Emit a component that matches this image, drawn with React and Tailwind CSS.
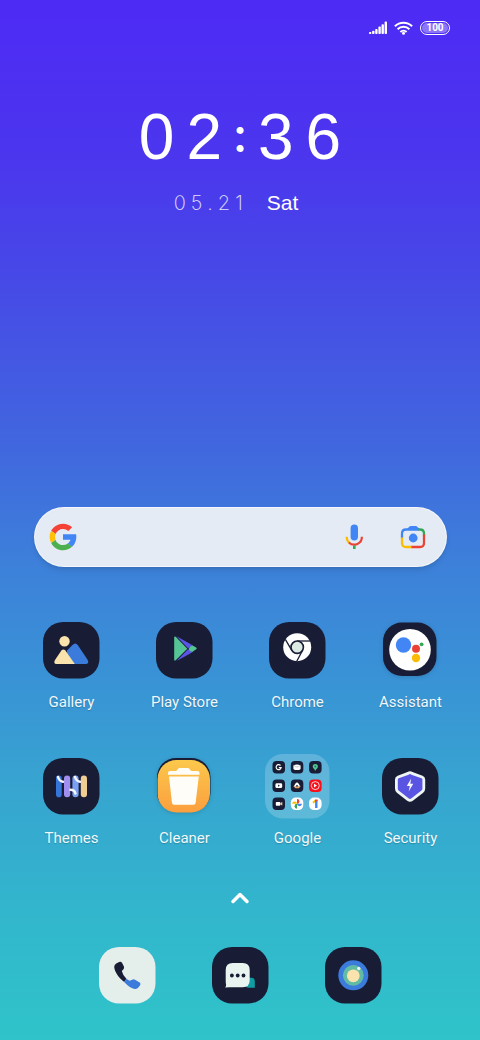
import { ChevronUp } from 'lucide-react';

const NIGHT = '#191c35';

function Tile({ fill = NIGHT, children }) {
  return (
    <svg viewBox="0 0 57 57" className="w-[57px] h-[57px] overflow-visible" aria-hidden="true">
      <rect width="56.500" height="56.500" rx="20" fill={fill} />
      {children}
    </svg>
  );
}

function GalleryIcon() {
  return (
    <Tile>
      <circle cx="21.500" cy="19.300" r="5.200" fill="#fbe3ad" />
      <path d="M24 28.500l5.500-5.500q3-3.200 5.400.2l9.700 14.500q2 4-2 4.300H24z" fill="#3b7bdc" />
      <path d="M12 37.900l6.400-9.300q2-2.300 4 0L31.800 42H13.300q-3.200-.5-1.300-4.100z" fill="#fbe3ad" />
    </Tile>
  );
}

function PlayIcon() {
  return (
    <Tile>
      <path d="M18.200 15.200v22.600q.3 1.600 1.500.5L31.300 26.700 19.700 14.800Q18.400 14 18.200 15.200z" fill="#56c596" />
      <path d="M20.500 14.200l16.500 9.300L32 26.200z" fill="#5a55e6" />
      <path d="M20.500 39l16-8.800-4.500-3z" fill="#5a55e6" />
      <path d="M36.500 23.400l3.700 2.100q1.200.9 0 1.800l-4 2.600q-2.600-.2-3.600-3 .9-3 3.900-3.500z" fill="#56c596" />
    </Tile>
  );
}

function ChromeIcon() {
  return (
    <Tile>
      <circle cx="28.200" cy="25.200" r="14" fill="#fff" />
      <g stroke={NIGHT} strokeWidth="1.300" fill="none">
        <path d="M28.200 19H41" />
        <path d="M22.800 28.300L16.300 17.400" />
        <path d="M33.600 28.300L27.500 39.700" />
      </g>
      <circle cx="28.200" cy="25.200" r="6.200" fill="#dcebe2" stroke={NIGHT} strokeWidth="1.600" />
    </Tile>
  );
}

function AssistantIcon() {
  return (
    <svg viewBox="0 0 57 57" className="w-[57px] h-[57px] overflow-visible drop-shadow-sm" aria-hidden="true">
      <rect x="1" y="0.500" width="53.500" height="53.500" rx="19" fill={NIGHT} />
      <circle cx="28" cy="27.700" r="20.800" fill="#fff" />
      <circle cx="21.500" cy="23" r="7.700" fill="#4285f4" />
      <circle cx="34" cy="26.700" r="4" fill="#ea4335" />
      <circle cx="39.600" cy="22.300" r="1.900" fill="#34a853" />
      <circle cx="34" cy="36" r="4.200" fill="#fbbc04" />
    </svg>
  );
}

function ThemesIcon() {
  return (
    <Tile>
      <rect x="13" y="17.500" width="5.700" height="21.700" rx="2.800" fill="#3575da" />
      <rect x="21" y="17.500" width="6.200" height="21.700" rx="3" fill="#a08ff0" />
      <rect x="29.400" y="17.500" width="6.200" height="21.700" rx="3" fill="#79a0f2" />
      <rect x="37.800" y="17.500" width="6.200" height="21.700" rx="3" fill="#efcd93" />
      <g fill="none" stroke="#f5f6fb" strokeWidth="2.500" strokeLinecap="round">
        <path d="M15 19c1 3.500 2.500 4.300 5 4.800" />
        <path d="M32 19c1 3.500 2.500 4.300 5 4.800" />
        <path d="M27.500 31.700c2.600 0 4.400.8 4.900 3.800" />
      </g>
    </Tile>
  );
}

function CleanerIcon() {
  return (
    <svg viewBox="0 0 57 57" className="w-[57px] h-[57px] overflow-visible drop-shadow-sm" aria-hidden="true">
      <defs>
        <linearGradient id="cleaner" x1="0" y1="0" x2="0" y2="1">
          <stop offset="0" stopColor="#fcc84c" />
          <stop offset="1" stopColor="#fb9f3e" />
        </linearGradient>
      </defs>
      <rect x="1" y="0" width="53.500" height="53.500" rx="19" fill={NIGHT} />
      <rect x="1.500" y="2" width="52.500" height="52.500" rx="19" fill="url(#cleaner)" />
      <path d="M12 16.700v-2q0-1.800 2-1.800h5.500q1.200 0 2-1.500.6-1.500 2-1.500h8.500q1.400 0 2 1.500.8 1.500 2 1.500H41.500q2 0 2 1.800v2z" fill="#fffdf8" />
      <path d="M13 18.500h29.800l-3.200 26.500q-.2 1.700-2 1.700h-19.600q-1.800 0-2-1.700z" fill="#fffdf8" />
    </svg>
  );
}

function SecurityIcon() {
  return (
    <Tile>
      <path
        d="M28 14.700q1 0 2 .7l10 3.600q1.800.8 1.800 2.600v8.800q0 2-1.500 3.200L30 41.600q-2 1.500-4 0L15.800 33.600q-1.400-1.200-1.400-3.200v-8.800q0-1.800 1.800-2.600l9.800-3.600q1-.7 2-.7z"
        fill="#5a54e2"
        stroke="#eef5f3"
        strokeWidth="2.800"
      />
      <path d="M29.200 20.500l-4.400 7.500h3l-1.100 5.500 4.600-7.700h-3z" fill="#f4f7fb" />
    </Tile>
  );
}

function GoogleFolder() {
  return (
    <svg viewBox="0 0 65 65" className="-m-1 w-[65px] h-[65px]" aria-hidden="true">
      <rect width="64.500" height="64.500" rx="18" fill="#fff" fillOpacity=".2" />
      <g fill={NIGHT}>
        <rect x="7.500" y="7" width="12.500" height="12.500" rx="4" />
        <rect x="25.800" y="7" width="12.500" height="12.500" rx="4" />
        <rect x="44.100" y="7" width="12.500" height="12.500" rx="4" />
        <rect x="7.500" y="25.400" width="12.500" height="12.500" rx="4" />
        <rect x="25.800" y="25.400" width="12.500" height="12.500" rx="4" />
        <rect x="7.500" y="43.600" width="12.500" height="12.500" rx="4" />
      </g>
      <path d="M15.500 11.500A2.500 2.500 0 1 0 16.100 13.700H13.800" fill="none" stroke="#fff" strokeWidth="1.200" />
      <path d="M28.400 11.500q3.600-1.800 7.200 0v2.800q0 1.700-1.700 1.700h-3.800q-1.700 0-1.700-1.700z" fill="#fff" />
      <path d="M28.800 11.300q3.200 3.400 6.400 0" fill="none" stroke="#a9adba" strokeWidth=".7" />
      <path d="M50.300 17c-.4-2-2.600-2.700-2.600-4.500a2.600 2.600 0 0 1 5.200 0c0 1.800-2.200 2.500-2.600 4.500z" fill="#56c596" />
      <circle cx="50.300" cy="12.500" r=".9" fill="#2a6b68" />
      <rect x="10.400" y="29.300" width="6.800" height="4.800" rx="1.400" fill="#fff" />
      <path d="M13.100 30.600v2.200l1.800-1.100z" fill={NIGHT} />
      <path d="M30.300 29.800q1.700-2.400 3.400 0l1.800 3h-7z" fill="#fff" />
      <path d="M29 32.600h6.200l-1.200 1.700h-3.800z" fill="#eea060" />
      <circle cx="32" cy="31.800" r=".9" fill={NIGHT} />
      <rect x="44.100" y="25.400" width="12.500" height="12.500" rx="4" fill="#f8101a" />
      <circle cx="50.300" cy="31.600" r="4" fill="none" stroke="#fff" strokeWidth=".8" />
      <path d="M49 29.800v3.600l3-1.800z" fill="#fff" />
      <rect x="10.800" y="47.900" width="4.500" height="3.800" rx=".8" fill="#fff" />
      <path d="M15.300 49l2-1.100v3.600l-2-1.100z" fill="#efcd93" />
      <rect x="25.800" y="43.600" width="12.500" height="12.500" rx="5" fill="#fff" />
      <path d="M32 49.800v-4.800a2.400 2.400 0 0 1 0 4.800z" fill="#ea4335" />
      <path d="M32 49.800h4.900a2.400 2.400 0 0 1-4.900 0z" fill="#4285f4" />
      <path d="M32 49.800v4.900a2.400 2.400 0 0 1 0-4.900z" fill="#34a853" />
      <path d="M32 49.800h-4.800a2.400 2.400 0 0 1 4.800 0z" fill="#fbbc04" />
      <rect x="44.100" y="43.600" width="12.500" height="12.500" rx="5" fill="#fff" />
      <path d="M48 48.700l3-2.500" stroke="#fbbc04" strokeWidth="2" />
      <path d="M51.300 46v8" stroke="#4285f4" strokeWidth="2.400" />
      <path d="M50.100 45.500h2.400v1.800h-2.400z" fill="#ea4335" />
    </svg>
  );
}

function PhoneIcon() {
  return (
    <Tile fill="#e4eeeb">
      <path d="M17.200 16.600l3-1.600q1.700-.8 2.800.8l1.900 3.800q.7 1.600-.6 2.900l-1.500 1.600q.8 4 4.600 7.600l-2.200 3.200C19.500 30.500 15.800 25 15.200 19.900q0-2.200 2-3.300z" fill={NIGHT} />
      <path d="M27.400 31.700q2 1.700 3.400 2l2.300-1q1.500-.8 2.900 0l4.700 2.800q1.300 1.100.5 2.600l-1.800 2.400q-1.300 1.700-3.600 1.400-5-.8-10.600-7z" fill="#3b7bdc" />
    </Tile>
  );
}

function MessagesIcon() {
  return (
    <Tile>
      <path d="M33 30.700h6.500q3.300 0 3.300 3.500v6.600H37q-4 0-4-4z" fill="#119ba2" />
      <path d="M20.700 16h10q7 0 7 7v10.300q0 7-7 7H17q-1.500 0-3.900.2 1.100-1 1-2.700-.4-1.500-.4-4.500V23q0-7 7-7z" fill="#e9f3f0" />
      <circle cx="19.900" cy="28.500" r="1.900" fill={NIGHT} />
      <circle cx="25.700" cy="28.500" r="1.900" fill={NIGHT} />
      <circle cx="31.500" cy="28.500" r="1.900" fill={NIGHT} />
    </Tile>
  );
}

function CameraIcon() {
  return (
    <Tile>
      <circle cx="28.300" cy="28.300" r="15" fill="#3b7bdc" />
      <circle cx="28.300" cy="28.300" r="10.400" fill="#62bba5" />
      <circle cx="28.300" cy="28.800" r="6.400" fill="#fae3ac" />
      <circle cx="33.800" cy="21.500" r="1.700" fill="#e9f3f0" />
    </Tile>
  );
}

function GoogleG() {
  return (
    <svg viewBox="0 0 48 48" className="size-8 shrink-0" aria-hidden="true">
      <path fill="#4285f4" d="M43.600 20H24v8.200h11.300c-.8 2.200-2.200 4.200-4.100 5.600l6.200 5.200C37 39.200 44 34 44 24c0-1.300-.1-2.700-.4-4z" />
      <path fill="#f44336" d="M6.300 14.700l6.600 4.800C14.700 15.100 19 12 24 12c3.100 0 5.800 1.200 8 3l5.700-5.700C34 6.100 29.300 4 24 4 16.300 4 9.700 8.300 6.300 14.700z" />
      <path fill="#4caf50" d="M24 44c5.200 0 9.900-2 13.400-5.200l-6.200-5.200A12 12 0 0 1 24 36c-5.200 0-9.600-3.300-11.300-8l-6.500 5C9.500 39.600 16.200 44 24 44z" />
      <path fill="#ffc107" d="M6.300 14.700A20 20 0 0 0 6.200 33.100l6.500-5a12 12 0 0 1 .2-8.600z" />
    </svg>
  );
}

function MicIcon() {
  return (
    <svg viewBox="0 0 24 28" className="w-6 h-7" fill="none" strokeWidth="2.200" aria-hidden="true">
      <rect x="8.600" y="1.500" width="7.400" height="16" rx="3.700" fill="#4285f4" />
      <path d="M4.700 13.700a7.700 7.700 0 0 0 2.600 6" stroke="#fbbc04" />
      <path d="M6.900 19.500a7.700 7.700 0 0 0 13-5.800" stroke="#ea4335" />
      <path d="M12.300 22.600V26" stroke="#34a853" strokeWidth="2.600" />
    </svg>
  );
}

function LensIcon() {
  return (
    <svg viewBox="0 0 26 26" className="size-[26px]" fill="none" strokeWidth="2.300" aria-hidden="true">
      <path d="M7 5l2-2q.7-1 2-1h4.500q1.300 0 2 1l2 2z" fill="#4285f4" />
      <path d="M2 14V9.500q0-4 4-4H19" stroke="#4285f4" />
      <path d="M18.500 5.500H20q4 0 4 4v2" stroke="#34a853" />
      <path d="M24 10.500V19q0 4-4 4H11" stroke="#ea4335" />
      <path d="M2 13.500V19q0 4 4 4h5.500" stroke="#fbbc04" />
      <circle cx="13.200" cy="14" r="4.400" fill="#4285f4" />
    </svg>
  );
}

function StatusBar() {
  return (
    <header className="flex items-center justify-end gap-[7px] h-4 mt-5 pr-[30px] text-white">
      <svg viewBox="0 0 18 14" className="w-[18px] h-3.5" fill="currentColor" role="img" aria-label="Signal">
        <rect x="0" y="11" width="2.400" height="2" rx=".8" />
        <rect x="3.100" y="9.700" width="2.400" height="3.300" rx=".8" />
        <rect x="6.200" y="8" width="2.400" height="5" rx=".8" />
        <rect x="9.400" y="5.600" width="2.400" height="7.400" rx=".8" />
        <rect x="12.500" y="3.200" width="2.400" height="9.800" rx=".8" />
        <rect x="15.600" y=".6" width="2.400" height="12.400" rx=".8" />
      </svg>
      <svg viewBox="0 0 19 14" className="w-[19px] h-3.5" fill="none" stroke="currentColor" strokeWidth="2" role="img" aria-label="Wi-Fi">
        <path d="M.9 5.200a12.200 12.200 0 0 1 17.200 0" />
        <path d="M3.600 8.200a8.300 8.300 0 0 1 11.800 0" />
        <path d="M6.400 11a4.500 4.500 0 0 1 6.200 0" />
        <circle cx="9.500" cy="12.300" r="1.500" fill="currentColor" stroke="none" />
      </svg>
      <div className="flex w-[30px] h-3.5 p-px rounded-full border border-white">
        <div className="flex flex-1 items-center justify-center rounded-full bg-white/35 font-bold text-[10px] leading-none">
          100
        </div>
      </div>
    </header>
  );
}

function Clock() {
  return (
    <section className="flex flex-col items-center text-white font-['Liberation_Sans',Arial,sans-serif]">
      <time className="flex gap-3 text-[64px] leading-[64px]">
        <span>0</span>
        <span>2</span>
        <span className="flex justify-center w-3 h-15 text-5xl leading-[60px] font-['Inter',sans-serif] font-medium">:</span>
        <span>3</span>
        <span>6</span>
      </time>
      <div className="flex items-center gap-6 mt-[22px] mr-2 leading-6">
        <time className="flex gap-[5px] text-xl leading-6 font-['Inter',sans-serif] font-extralight text-white/85">
          <span>0</span>
          <span>5</span>
          <span>.</span>
          <span>2</span>
          <span>1</span>
        </time>
        <span className="text-[21px]">Sat</span>
      </div>
    </section>
  );
}

function SearchBar() {
  return (
    <form className="flex items-center h-[60px] ml-[34px] mr-[33px] pl-3 pr-5 rounded-full border border-white/60 bg-[#e5ebf4] shadow-md">
      <GoogleG />
      <input type="text" aria-label="Search" className="flex-1 min-w-0 px-3 h-10 bg-transparent outline-none text-gray-800" />
      <button type="button" aria-label="Voice search">
        <MicIcon />
      </button>
      <button type="button" aria-label="Google Lens" className="ml-[34px]">
        <LensIcon />
      </button>
    </form>
  );
}

const apps = [
  { name: 'Gallery', Icon: GalleryIcon },
  { name: 'Play Store', Icon: PlayIcon },
  { name: 'Chrome', Icon: ChromeIcon },
  { name: 'Assistant', Icon: AssistantIcon },
  { name: 'Themes', Icon: ThemesIcon },
  { name: 'Cleaner', Icon: CleanerIcon },
  { name: 'Google', Icon: GoogleFolder },
  { name: 'Security', Icon: SecurityIcon },
];

const dock = [
  { name: 'Phone', Icon: PhoneIcon },
  { name: 'Messages', Icon: MessagesIcon },
  { name: 'Camera', Icon: CameraIcon },
];

export default function App() {
  return (
    <main className="flex flex-col min-h-screen font-['Roboto',sans-serif] bg-[linear-gradient(180deg,#4e2af5_0%,#4b36ee_15%,#464be6_28%,#4165df_42%,#3d80da_54%,#3994d5_66%,#37a5d0_76%,#32b5cd_87%,#2fc4c9_100%)]">
      <StatusBar />
      <div className="mt-[69px]">
        <Clock />
      </div>
      <div className="flex-1 min-h-10" />
      <SearchBar />

      <div className="grid grid-cols-4 gap-y-[46px] mt-[55px] pl-[15px] pr-[13px]">
        {apps.map(({ name, Icon }) => (
          <button key={name} type="button" className="flex flex-col items-center gap-[13px] text-white/95 text-[15px] leading-5 text-shadow-xs">
            <Icon />
            <span>{name}</span>
          </button>
        ))}
      </div>

      <button type="button" aria-label="Open app drawer" className="self-center mt-9 text-white">
        <ChevronUp className="size-7" strokeWidth={3} />
      </button>

      {/* Dock */}
      <nav className="grid grid-cols-3 mt-[35px] mb-9 pl-[71px] pr-[70px]">
        {dock.map(({ name, Icon }) => (
          <button key={name} type="button" aria-label={name} className="flex justify-center">
            <Icon />
          </button>
        ))}
      </nav>
    </main>
  );
}
